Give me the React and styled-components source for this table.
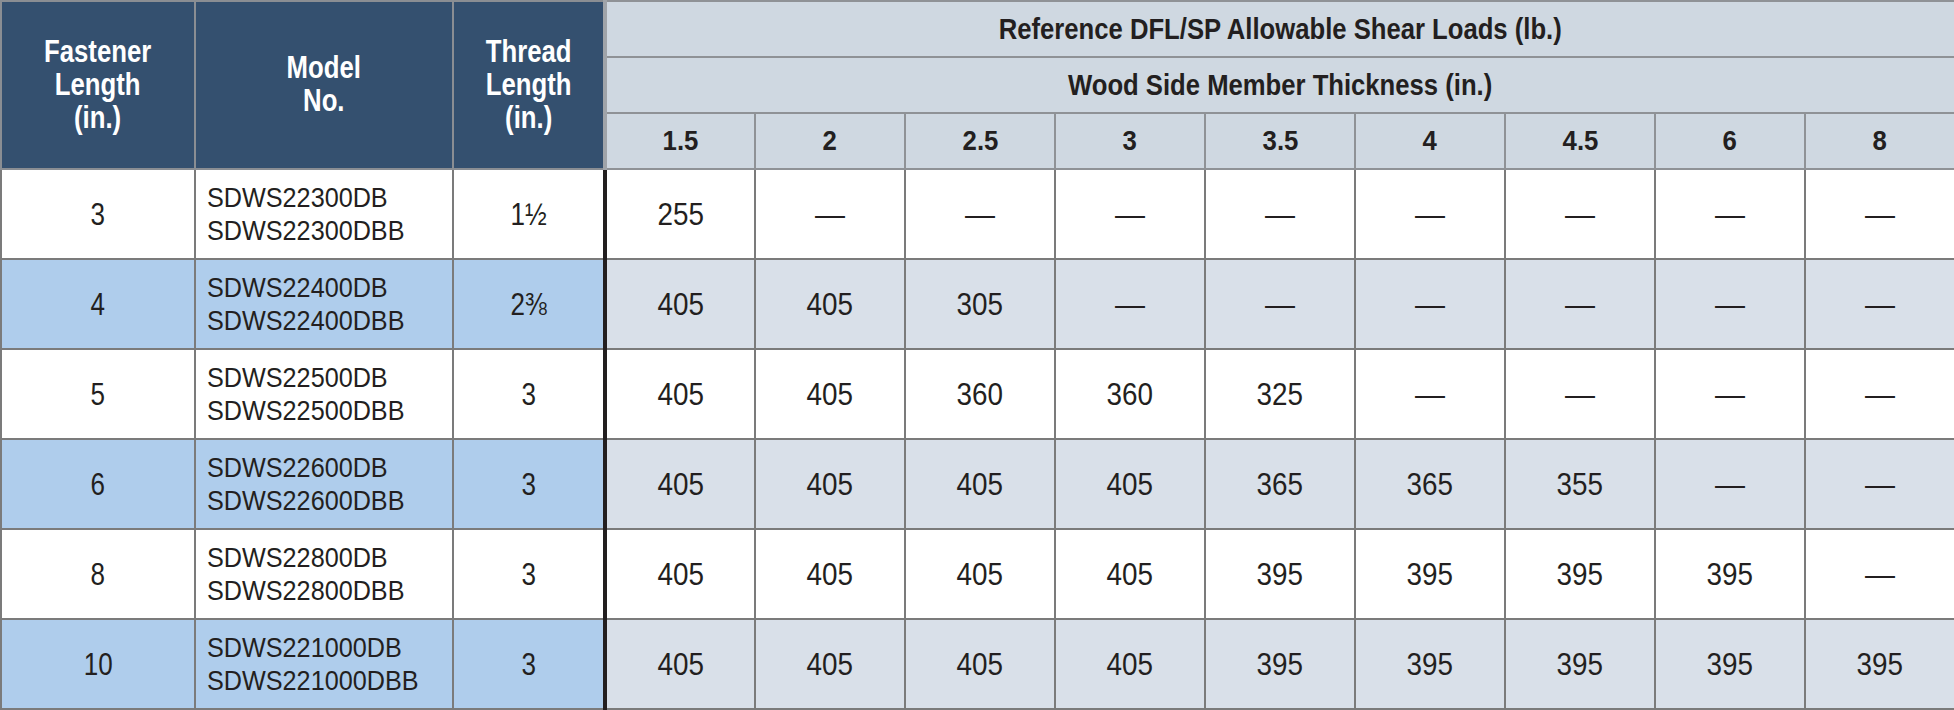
import React from "react";
import styled, { createGlobalStyle } from "styled-components";

const GlobalStyle = createGlobalStyle`
  html, body {
    margin: 0;
    padding: 0;
    background: #ffffff;
  }
  body {
    font-family: "Liberation Sans", Arial, sans-serif;
    color: #231f20;
  }
`;

// Liberation Sans squeezed horizontally to stand in for the condensed face
const Narrow = styled.span`
  display: inline-block;
  white-space: nowrap;
  transform: scaleX(${p => p.$scale || 0.84});
  transform-origin: ${p => (p.$left ? "left center" : "center center")};
`;

const Table = styled.table`
  width: 1954px;
  table-layout: fixed;
  border-collapse: collapse;
  font-family: "Liberation Sans", Arial, sans-serif;
`;

const DarkHead = styled.th`
  background: #34506f;
  color: #ffffff;
  font-weight: 700;
  font-size: 31px;
  line-height: 33px;
  border: 2px solid #8a8e93;
  padding: 0 0 2px;
  text-align: center;
  vertical-align: middle;
`;

const LightHead = styled.th`
  background: #cfd8e1;
  color: #231f20;
  font-weight: 700;
  font-size: ${p => (p.$small ? "28px" : "30px")};
  line-height: 30px;
  height: 54px;
  padding: 0;
  text-align: center;
  vertical-align: middle;
  border: 2px solid #8f9296;
  border-left: ${p => (p.$first ? "4px solid #a0a4a9" : "2px solid #8f9296")};
`;

const Row = styled.tr`
  height: 90px;
`;

const Cell = styled.td`
  height: 88px;
  padding: 0;
  font-size: ${p => (p.$left ? "28px" : "31px")};
  line-height: 33px;
  font-weight: 400;
  text-align: ${p => (p.$left ? "left" : "center")};
  padding-left: ${p => (p.$left ? "11px" : "0")};
  vertical-align: middle;
  border: 2px solid #7b7b7b;
  background: ${p => (p.$alt ? "#afcdec" : "#ffffff")};
`;

const LoadCell = styled(Cell)`
  font-size: 32px;
  background: ${p => (p.$alt ? "#d9e0e9" : "#ffffff")};
  border-left: ${p => (p.$first ? "4px solid #231f20" : "2px solid #7b7b7b")};
`;

const Dash = styled.span`
  display: inline-block;
  font-size: 30px;
`;

const thickness = ["1.5", "2", "2.5", "3", "3.5", "4", "4.5", "6", "8"];

const rows = [
  { len: "3", models: ["SDWS22300DB", "SDWS22300DBB"], thread: "1½", loads: ["255"] },
  { len: "4", models: ["SDWS22400DB", "SDWS22400DBB"], thread: "2⅜", loads: ["405", "405", "305"] },
  { len: "5", models: ["SDWS22500DB", "SDWS22500DBB"], thread: "3", loads: ["405", "405", "360", "360", "325"] },
  {
    len: "6",
    models: ["SDWS22600DB", "SDWS22600DBB"],
    thread: "3",
    loads: ["405", "405", "405", "405", "365", "365", "355"],
  },
  {
    len: "8",
    models: ["SDWS22800DB", "SDWS22800DBB"],
    thread: "3",
    loads: ["405", "405", "405", "405", "395", "395", "395", "395"],
  },
  {
    len: "10",
    models: ["SDWS221000DB", "SDWS221000DBB"],
    thread: "3",
    loads: ["405", "405", "405", "405", "395", "395", "395", "395", "395"],
  },
];

export default function App() {
  return (
    <>
      <GlobalStyle />
      <Table>
        <colgroup>
          <col style={{ width: 194 }} />
          <col style={{ width: 258 }} />
          <col style={{ width: 152 }} />
          {thickness.map(t => (
            <col key={t} style={{ width: 150 }} />
          ))}
        </colgroup>
        <thead>
          <tr>
            <DarkHead rowSpan={3}>
              <Narrow $scale={0.83}>
                Fastener
                <br />
                Length
                <br />
                (in.)
              </Narrow>
            </DarkHead>
            <DarkHead rowSpan={3}>
              <Narrow $scale={0.83}>
                Model
                <br />
                No.
              </Narrow>
            </DarkHead>
            <DarkHead rowSpan={3}>
              <Narrow $scale={0.83}>
                Thread
                <br />
                Length
                <br />
                (in.)
              </Narrow>
            </DarkHead>
            <LightHead colSpan={9} $first>
              <Narrow $scale={0.855}>Reference DFL/SP Allowable Shear Loads (lb.)</Narrow>
            </LightHead>
          </tr>
          <tr>
            <LightHead colSpan={9} $first>
              <Narrow $scale={0.855}>Wood Side Member Thickness (in.)</Narrow>
            </LightHead>
          </tr>
          <tr>
            {thickness.map((t, i) => (
              <LightHead key={t} $first={i === 0} $small>
                <Narrow $scale={0.92}>{t}</Narrow>
              </LightHead>
            ))}
          </tr>
        </thead>
        <tbody>
          {rows.map((r, ri) => {
            const alt = ri % 2 === 1;
            return (
              <Row key={r.len}>
                <Cell $alt={alt}>
                  <Narrow>{r.len}</Narrow>
                </Cell>
                <Cell $alt={alt} $left>
                  <Narrow $left $scale={0.9}>
                    {r.models[0]}
                    <br />
                    {r.models[1]}
                  </Narrow>
                </Cell>
                <Cell $alt={alt}>
                  <Narrow>{r.thread}</Narrow>
                </Cell>
                {thickness.map((t, i) => (
                  <LoadCell key={t} $alt={alt} $first={i === 0}>
                    {r.loads[i] ? <Narrow $scale={0.87}>{r.loads[i]}</Narrow> : <Dash>—</Dash>}
                  </LoadCell>
                ))}
              </Row>
            );
          })}
        </tbody>
      </Table>
    </>
  );
}
